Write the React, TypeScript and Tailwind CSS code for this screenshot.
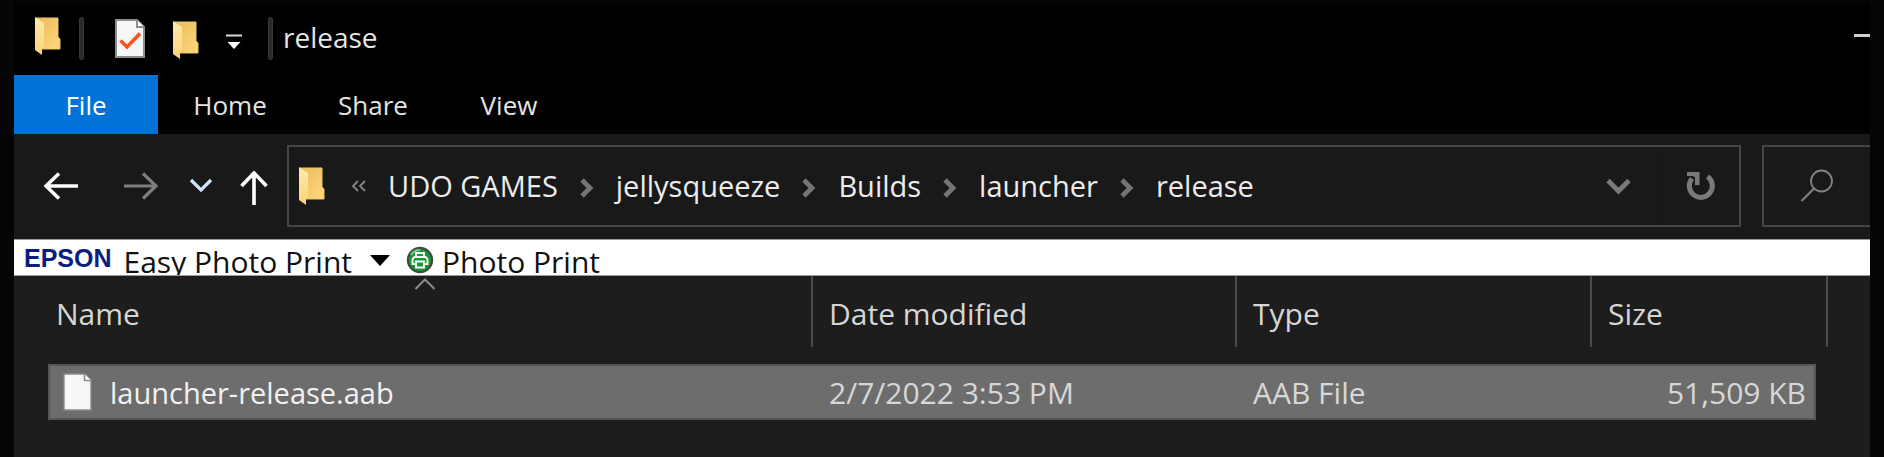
import React from "react";

function FolderIcon() {
  return (
    <svg width="26" height="38" viewBox="0 0 26 38" aria-hidden="true" className="shrink-0">
      <defs>
        <linearGradient id="folderBack" x1="0" y1="0" x2="1" y2="1">
          <stop offset="0" stopColor="#e9bc5c" />
          <stop offset="1" stopColor="#ffd77d" />
        </linearGradient>
        <linearGradient id="folderFlap" x1="0" y1="0" x2="0" y2="1">
          <stop offset="0" stopColor="#ffe9ae" />
          <stop offset="1" stopColor="#fbd375" />
        </linearGradient>
      </defs>
      <path d="M1 1h22v19l2 2v10H7L1 30z" fill="url(#folderBack)" stroke="#efc667" strokeWidth="1" />
      <path d="M0 0l9 6v23l-2 2v7l-7-5z" fill="url(#folderFlap)" />
    </svg>
  );
}

function CheckedPageIcon() {
  return (
    <svg width="30" height="40" viewBox="0 0 30 40" aria-hidden="true" className="shrink-0">
      <path d="M1 1h21l7 7v30H1z" fill="#f5f6f8" stroke="#8d8d8d" strokeWidth="2" />
      <path d="M22 1v7h7" fill="#ffffff" stroke="#8d8d8d" strokeWidth="2" />
      <path d="M5.500 21.500l6.500 6.500L25 14.500" fill="none" stroke="#f9501f" strokeWidth="3.6" />
    </svg>
  );
}

function FileIcon() {
  return (
    <svg width="30" height="38" viewBox="0 0 30 38" aria-hidden="true" className="shrink-0">
      <path d="M1 1h21l6 6v30H1z" fill="#f6f7f8" stroke="#8a8a8a" strokeWidth="1.4" />
      <path d="M21.5 1v6.5H28" fill="#ffffff" stroke="#8a8a8a" strokeWidth="1.6" />
    </svg>
  );
}

function PrinterBadgeIcon() {
  return (
    <svg width="28" height="28" viewBox="0 0 28 28" aria-hidden="true" className="shrink-0">
      <circle cx="14" cy="14" r="12" fill="#129a35" stroke="#444b46" strokeWidth="2.4" />
      <path d="M5 9a10 10 0 0 1 9-5" fill="none" stroke="#6fcf86" strokeWidth="2" />
      <g fill="none" stroke="#ffffff" strokeWidth="1.8">
        <path d="M10 11V7h8v4" />
        <path d="M9 18H6.500v-5l2-2h11l2 2v5H19" />
        <path d="M10 15.500h8V21.500h-8z" />
      </g>
    </svg>
  );
}

function Crumb({ children }: { children: React.ReactNode }) {
  return (
    <a href="#" className="whitespace-nowrap">
      {children}
    </a>
  );
}

function CrumbArrow() {
  return (
    <svg width="14" height="20" viewBox="0 0 14 20" aria-hidden="true" className="mx-[22px] mt-1 shrink-0">
      <path d="M2 2l8 8-8 8" fill="none" stroke="#757575" strokeWidth="4.8" />
    </svg>
  );
}

function TitleBar() {
  return (
    <header className="flex h-[72px] items-start bg-black pl-[21px] pt-[14px]">
      <FolderIcon />
      <span className="ml-[18px] h-[43px] w-[5px] rounded-sm border border-[#3b3b3b] bg-[#2a2a2a]" />
      <button aria-label="Properties" className="ml-[31px] mt-[2px]">
        <CheckedPageIcon />
      </button>
      <button aria-label="New folder" className="ml-7 mt-1">
        <FolderIcon />
      </button>
      <button aria-label="Customize toolbar" className="ml-[26px] mt-[17px]">
        <svg width="18" height="16" viewBox="0 0 18 16" aria-hidden="true">
          <path d="M1 1.500h16" stroke="#d8d8d8" strokeWidth="2" />
          <path d="M2.500 8h13L9 15z" fill="#ffffff" />
        </svg>
      </button>
      <span className="ml-[25px] h-[43px] w-[5px] rounded-sm border border-[#3b3b3b] bg-[#2a2a2a]" />
      <h1 className="ml-[10px] text-[28px] leading-[40px] text-[#e6e6e6]">release</h1>
      <button aria-label="Minimize" className="ml-auto mt-[17px] h-[3px] w-4 bg-[#cfcfcf]" />
    </header>
  );
}

function RibbonTabs() {
  return (
    <nav className="flex h-[59px] bg-black text-[26px] leading-[60px] text-[#e4e4e4]">
      <button className="w-36 bg-[#0173d8] text-white">File</button>
      <button className="w-36">Home</button>
      <button className="w-[142px]">Share</button>
      <button className="w-[130px]">View</button>
    </nav>
  );
}

function AddressRow() {
  return (
    <div className="flex h-[105px] items-start bg-[#191919] pt-[11px]">
      <div className="flex h-[82px] shrink-0 items-center pl-[30px] pr-[19px]">
        <button aria-label="Back">
          <svg width="34" height="28" viewBox="0 0 34 28" aria-hidden="true">
            <path d="M34 14H2M15 1.500L2 14l13 12.500" fill="none" stroke="#ffffff" strokeWidth="3.600" />
          </svg>
        </button>
        <button aria-label="Forward" className="ml-[46px]">
          <svg width="34" height="28" viewBox="0 0 34 28" aria-hidden="true">
            <path d="M0 14h32M19 1.500L32 14 19 26.500" fill="none" stroke="#7f7f7f" strokeWidth="3.200" />
          </svg>
        </button>
        <button aria-label="Recent locations" className="ml-[31px]">
          <svg width="24" height="16" viewBox="0 0 24 16" aria-hidden="true">
            <path d="M2 2l10 10L22 2" fill="none" stroke="#cfe6fa" strokeWidth="3.200" />
          </svg>
        </button>
        <button aria-label="Up" className="ml-[27px] mt-1">
          <svg width="28" height="34" viewBox="0 0 28 34" aria-hidden="true">
            <path d="M14 34V2M1.500 15L14 2l12.500 13" fill="none" stroke="#ffffff" strokeWidth="3.600" />
          </svg>
        </button>
      </div>
      <div className="flex h-[82px] min-w-0 flex-1 items-center border-2 border-[#454545] pl-[10px] text-[29px] text-[#ececec]">
        <FolderIcon />
        <svg width="16" height="12" viewBox="0 0 16 12" aria-hidden="true" className="ml-[26px] mr-[21px] shrink-0">
          <path d="M7 1L2 6l5 5M14 1L9 6l5 5" fill="none" stroke="#858585" strokeWidth="1.800" />
        </svg>
        <Crumb>UDO GAMES</Crumb>
        <CrumbArrow />
        <Crumb>jellysqueeze</Crumb>
        <CrumbArrow />
        <Crumb>Builds</Crumb>
        <CrumbArrow />
        <Crumb>launcher</Crumb>
        <CrumbArrow />
        <Crumb>release</Crumb>
        <button aria-label="Previous locations" className="ml-auto mr-[26px]">
          <svg width="25" height="17" viewBox="0 0 25 17" aria-hidden="true">
            <path d="M2 2.500l10.500 10.500L23 2.500" fill="none" stroke="#7a7a7a" strokeWidth="4.800" />
          </svg>
        </button>
        <button aria-label="Refresh" className="flex h-full w-[82px] items-center border-l border-[#151515] pl-7">
          <svg width="30" height="30" viewBox="0 0 30 30" aria-hidden="true">
            <path d="M6 7.500A11.500 11.500 0 1 0 21.500 5.500" fill="none" stroke="#7a7a7a" strokeWidth="5" />
            <path d="M1 1h12.500v13H9V6L6 5H1z" fill="#7a7a7a" />
          </svg>
        </button>
      </div>
      <label className="ml-[21px] flex h-[82px] w-[108px] shrink-0 items-center border-2 border-r-0 border-[#454545] pl-9">
        <svg width="34" height="34" viewBox="0 0 34 34" aria-hidden="true" className="shrink-0">
          <circle cx="21.500" cy="12" r="10.500" fill="none" stroke="#858585" strokeWidth="1.800" />
          <path d="M14 19.500L1.500 32" stroke="#857f7a" strokeWidth="2.200" />
        </svg>
        <input type="search" aria-label="Search release" className="w-0 min-w-0 flex-1 bg-transparent outline-none" />
      </label>
    </div>
  );
}

function EpsonBar() {
  return (
    <div className="flex h-[37px] items-start overflow-hidden border-y border-[#9a9a9a] bg-white pl-[10px] text-[30px] leading-[44px] text-[#111111]">
      <span className="font-['Liberation_Sans',Arial,sans-serif] text-[25px] font-bold leading-[36px] text-[#0c1c80]">
        EPSON
      </span>
      <button className="ml-3 flex items-start whitespace-nowrap">
        Easy Photo Print
        <svg width="20" height="12" viewBox="0 0 20 12" aria-hidden="true" className="ml-[18px] mt-[15px]">
          <path d="M0 0h20L10 11z" fill="#000000" />
        </svg>
      </button>
      <button className="ml-4 flex items-start whitespace-nowrap">
        <span className="mr-[8px] mt-[6px]">
          <PrinterBadgeIcon />
        </span>
        Photo Print
      </button>
    </div>
  );
}

function HeaderCell({ label, sorted = false }: { label: string; sorted?: boolean }) {
  return (
    <th scope="col" className="h-[88px] p-0 align-top font-normal">
      <div
        className={
          sorted
            ? "relative h-[71px] pl-2"
            : "-ml-[2px] h-[71px] border-l-2 border-[#4c4c4c] pl-4"
        }
      >
        {label}
        {sorted && (
          <svg
            width="22"
            height="12"
            viewBox="0 0 22 12"
            aria-hidden="true"
            className="absolute left-[366px] top-[2px]"
          >
            <path d="M1.500 11L11 1.500 20.500 11" fill="none" stroke="#8c8c8c" strokeWidth="2" />
          </svg>
        )}
      </div>
    </th>
  );
}

function FileList() {
  return (
    <main className="flex-1 bg-[#1d1d1d] pl-[34px] pr-[42px]">
      <table className="w-full table-fixed border-separate border-spacing-0 text-left text-[30px]">
        <colgroup>
          <col />
          <col className="w-[424px]" />
          <col className="w-[355px]" />
          <col className="w-[224px]" />
          <col className="w-[12px]" />
        </colgroup>
        <thead className="leading-[76px] text-[#d6d6d6]">
          <tr>
            <HeaderCell label="Name" sorted />
            <HeaderCell label="Date modified" />
            <HeaderCell label="Type" />
            <HeaderCell label="Size" />
            <td className="h-[88px] p-0 align-top">
              <div className="h-[71px] border-r-2 border-[#4c4c4c]" />
            </td>
          </tr>
        </thead>
        <tbody className="leading-[50px] text-[#d8d8d8]">
          <tr>
            <td className="border-2 border-r-0 border-[#555555] bg-[#6d6d6d] p-0 pl-[13px] text-[29px] text-[#f2f2f2]">
              <div className="flex items-center">
                <FileIcon />
                <span className="ml-[17px] pt-[2px]">launcher-release.aab</span>
              </div>
            </td>
            <td className="border-y-2 border-[#555555] bg-[#6d6d6d] p-0 pl-4 pt-[2px]">2/7/2022 3:53 PM</td>
            <td className="border-y-2 border-[#555555] bg-[#6d6d6d] p-0 pl-4 pt-[2px]">AAB File</td>
            <td className="border-2 border-l-0 border-[#555555] bg-[#6d6d6d] p-0 pr-2 pt-[2px] text-right">51,509 KB</td>
            <td />
          </tr>
        </tbody>
      </table>
    </main>
  );
}

export default function App() {
  return (
    <div className="flex min-h-screen flex-col bg-[#050505] px-[14px] pt-[3px] font-['Open_Sans','Noto_Sans',sans-serif]">
      <TitleBar />
      <RibbonTabs />
      <AddressRow />
      <EpsonBar />
      <FileList />
    </div>
  );
}
